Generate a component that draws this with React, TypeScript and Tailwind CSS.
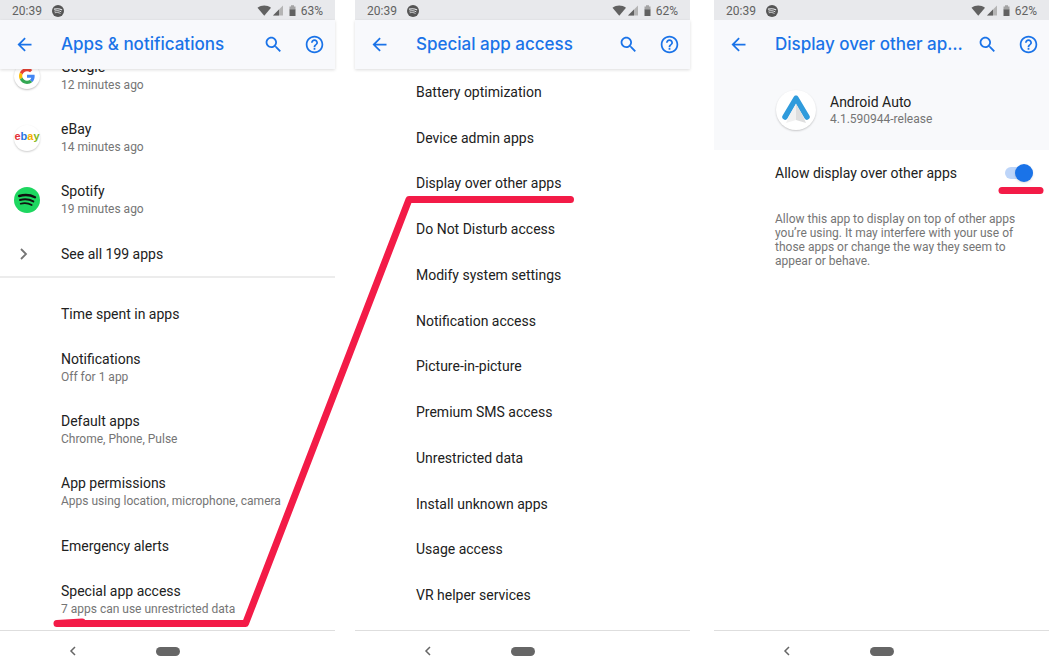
import type { ReactNode } from 'react'

type Row = { title: string; summary?: string }

const recentApps = [
  { title: 'Google', summary: '12 minutes ago', icon: <GoogleIcon /> },
  { title: 'eBay', summary: '14 minutes ago', icon: <EbayIcon /> },
  { title: 'Spotify', summary: '19 minutes ago', icon: <SpotifyIcon /> },
]

const appSettings: Row[] = [
  { title: 'Time spent in apps' },
  { title: 'Notifications', summary: 'Off for 1 app' },
  { title: 'Default apps', summary: 'Chrome, Phone, Pulse' },
  { title: 'App permissions', summary: 'Apps using location, microphone, camera' },
  { title: 'Emergency alerts' },
  { title: 'Special app access', summary: '7 apps can use unrestricted data' },
]

const specialAccess = [
  'Battery optimization',
  'Device admin apps',
  'Display over other apps',
  'Do Not Disturb access',
  'Modify system settings',
  'Notification access',
  'Picture-in-picture',
  'Premium SMS access',
  'Unrestricted data',
  'Install unknown apps',
  'Usage access',
  'VR helper services',
]

export default function App() {
  return (
    <main className="relative flex h-screen bg-white font-['Roboto',sans-serif] text-sm text-[#212121]">
      {/* Apps & notifications */}
      <Phone title="Apps & notifications" battery="63%">
        <div className="flex min-h-0 flex-1 flex-col justify-end overflow-hidden">
          {recentApps.map(app => (
            <SettingRow key={app.title} title={app.title} summary={app.summary} icon={app.icon} />
          ))}
          <SettingRow title="See all 199 apps" icon={<ChevronIcon />} />
          <hr className="mb-3 shrink-0 border-t-2 border-[#ececec]" />
          {appSettings.map(row => (
            <SettingRow key={row.title} title={row.title} summary={row.summary} />
          ))}
        </div>
      </Phone>

      {/* Special app access */}
      <Phone title="Special app access" battery="62%" className="ml-5">
        <div className="flex min-h-0 flex-1 flex-col pb-3">
          {specialAccess.map(title => (
            <button key={title} className="flex-1 pl-[61px] text-left">{title}</button>
          ))}
        </div>
      </Phone>

      {/* Display over other apps */}
      <Phone title="Display over other apps" battery="62%" className="ml-6" flat>
        <div className="flex items-center gap-3.5 bg-[#f8f9fb] pt-[21px] pr-4 pb-5 pl-[62px]">
          <AndroidAutoIcon />
          <div className="pt-0.5 leading-[17px]">
            <h2>Android Auto</h2>
            <p className="text-xs leading-[17px] text-[#757575]">4.1.590944-release</p>
          </div>
        </div>
        <label className="flex h-[46px] items-center justify-between pr-4 pl-[61px]">
          Allow display over other apps
          <input
            type="checkbox"
            role="switch"
            defaultChecked
            className="relative h-3 w-7 appearance-none rounded-full bg-[#dadce0] before:absolute before:-top-[3px] before:left-0 before:size-[18px] before:rounded-full before:bg-white before:shadow checked:bg-[#bdd5f9] checked:before:left-2.5 checked:before:bg-[#1a73e8]"
          />
        </label>
        <p className="pt-4 pr-6 pl-[61px] text-xs leading-[14px] text-[#757575]">
          Allow this app to display on top of other apps you’re using. It may interfere with your use of those apps or change the way they seem to appear or behave.
        </p>
      </Phone>

      {/* Marker strokes that lead from screen to screen */}
      <svg
        className="pointer-events-none absolute inset-0 size-full"
        viewBox="0 0 1049 671"
        preserveAspectRatio="none"
        fill="none"
        stroke="#f31b47"
        strokeWidth="7"
        strokeLinecap="round"
        strokeLinejoin="round"
      >
        <path d="M57 623.500 L82 622 M57 623.500 H245.500 L409 199.500 H570.500" />
        <path d="M1002 190.500 H1040" />
      </svg>
    </main>
  )
}

function Phone({ title, battery, className = '', flat = false, children }: {
  title: string
  battery: string
  className?: string
  flat?: boolean
  children: ReactNode
}) {
  return (
    <section className={`flex min-w-0 flex-1 flex-col ${className}`}>
      <div className="flex h-5 shrink-0 items-center bg-[#e8e9ec] px-3 pt-px text-xs text-[#616161]">
        <span>20:39</span>
        <SpotifyGlyph />
        <StatusIcons />
        <span className="ml-1">{battery}</span>
      </div>
      <header className={`z-10 flex h-[49px] shrink-0 items-center bg-[#f8f9fc] pr-[9px] pl-3 text-[#1a73e8] ${flat ? '' : 'shadow-[0_1px_3px_rgba(0,0,0,0.14)]'}`}>
        <IconButton label="Navigate up" d="M20 11H7.830l5.590-5.590L12 4l-8 8 8 8 1.410-1.410L7.830 13H20v-2z" />
        <h1 className="ml-[25px] min-w-0 flex-1 truncate font-['Inter',sans-serif] text-[17px] font-medium">{title}</h1>
        <div className="ml-3 flex gap-[17px]">
          <IconButton label="Search" d="M15.500 14h-.79l-.28-.27C15.410 12.590 16 11.110 16 9.500 16 5.910 13.090 3 9.500 3S3 5.910 3 9.500 5.910 16 9.500 16c1.610 0 3.090-.59 4.230-1.570l.27.28v.79l5 4.990L20.490 19l-4.990-5zm-6 0C7.010 14 5 11.990 5 9.500S7.010 5 9.500 5 14 7.010 14 9.500 11.990 14 9.500 14z" />
          <IconButton label="Help" d="M11 18h2v-2h-2v2zm1-16C6.480 2 2 6.480 2 12s4.480 10 10 10 10-4.480 10-10S17.520 2 12 2zm0 18c-4.410 0-8-3.590-8-8s3.590-8 8-8 8 3.590 8 8-3.590 8-8 8zm0-14c-2.210 0-4 1.790-4 4h2c0-1.100.9-2 2-2s2 .9 2 2c0 2-3 1.750-3 5h2c0-2.250 3-2.500 3-5 0-2.210-1.790-4-4-4z" />
        </div>
      </header>
      {children}
      <nav className="mt-auto flex h-[41px] shrink-0 items-center border-t border-[#dedede] text-[#666]">
        <div className="flex flex-1 justify-center">
          <button aria-label="Back" className="mr-2.5">
            <svg viewBox="0 0 8 10" className="h-2.5 w-2" fill="none" stroke="currentColor" strokeWidth="1.500">
              <path d="M6 1 2 5l4 4" />
            </svg>
          </button>
        </div>
        <button aria-label="Home" className="h-[9px] w-6 rounded-full bg-[#666]" />
        <div className="flex-1" />
      </nav>
    </section>
  )
}

function SettingRow({ title, summary, icon }: Row & { icon?: ReactNode }) {
  return (
    <button className={`flex shrink-0 items-center pt-[3px] text-left ${summary ? 'h-[62px]' : 'h-[46px]'}`}>
      <span className="flex w-[61px] shrink-0 pb-0.5 pl-3.5">{icon}</span>
      <span className="leading-[17px]">
        {title}
        {summary && <span className="block text-xs leading-[18px] text-[#757575]">{summary}</span>}
      </span>
    </button>
  )
}

function IconButton({ label, d }: { label: string; d: string }) {
  return (
    <button aria-label={label} className="flex size-6 items-center justify-center">
      <svg viewBox="0 0 24 24" className="size-[21px]" fill="currentColor">
        <path d={d} />
      </svg>
    </button>
  )
}

function StatusIcons() {
  return (
    <svg viewBox="0 0 40 12" className="ml-auto h-3 w-10" fill="#616161">
      <path d="M0.500 2.700C4.500-.3 10-.3 14 2.700L7.250 10.700z" />
      <path d="M26 .5v10H16z" fill="#b4b4b4" />
      <path d="M22 4.500v6h-6z" />
      <path d="M34 .3h3v1.200h1.500V5h-6V1.500H34z" fill="#a3a3a3" />
      <path d="M32.500 4.500h6V11h-6z" />
    </svg>
  )
}

function SpotifyGlyph() {
  return (
    <svg viewBox="0 0 26 26" className="ml-2.5 size-3">
      <circle cx="13" cy="13" r="13" fill="#555" />
      <SpotifyWaves color="#e8e9ec" />
    </svg>
  )
}

function SpotifyIcon() {
  return (
    <svg viewBox="0 0 26 26" className="size-[26px]">
      <circle cx="13" cy="13" r="13" fill="#1ed760" />
      <SpotifyWaves color="#111" />
    </svg>
  )
}

function SpotifyWaves({ color }: { color: string }) {
  return (
    <g fill="none" stroke={color} strokeLinecap="round">
      <path d="M5.200 9c5.500-1.600 11.200-1.200 15.800 1.300" strokeWidth="2.400" />
      <path d="M6 13c4.800-1.300 9.300-.8 13.300 1.400" strokeWidth="2" />
      <path d="M6.700 16.700c4-1 7.700-.6 11 1.300" strokeWidth="1.700" />
    </g>
  )
}

function GoogleIcon() {
  return (
    <span className="flex size-[26px] items-center justify-center rounded-full bg-white shadow-[0_1px_2px_rgba(0,0,0,0.25)]">
      <svg viewBox="0 0 48 48" className="size-4">
        <path fill="#ea4335" d="M24 9.500c3.540 0 6.710 1.220 9.210 3.600l6.850-6.850C35.900 2.380 30.470 0 24 0 14.620 0 6.510 5.380 2.560 13.220l7.980 6.190C12.430 13.720 17.740 9.500 24 9.500z" />
        <path fill="#4285f4" d="M46.980 24.550c0-1.570-.15-3.090-.38-4.550H24v9.020h12.940c-.58 2.960-2.260 5.480-4.780 7.180l7.730 6c4.510-4.180 7.090-10.360 7.090-17.650z" />
        <path fill="#fbbc05" d="M10.530 28.590c-.48-1.450-.76-2.990-.76-4.590s.27-3.140.76-4.590l-7.980-6.190C.92 16.460 0 20.120 0 24s.92 7.540 2.560 10.780l7.970-6.190z" />
        <path fill="#34a853" d="M24 48c6.480 0 11.930-2.130 15.890-5.810l-7.730-6c-2.150 1.450-4.920 2.300-8.160 2.300-6.260 0-11.570-4.220-13.470-9.910l-7.980 6.190C6.510 42.620 14.620 48 24 48z" />
      </svg>
    </span>
  )
}

function EbayIcon() {
  return (
    <span className="flex size-[26px] items-center justify-center rounded-full bg-white pb-0.5 font-['Liberation_Sans',sans-serif] text-[11px] font-bold shadow-[0_1px_2px_rgba(0,0,0,0.2)]">
      <span className="text-[#e53238]">e</span>
      <span className="text-[#2a75e0]">b</span>
      <span className="text-[#f5af02]">a</span>
      <span className="text-[#86b817]">y</span>
    </span>
  )
}

function ChevronIcon() {
  return (
    <svg viewBox="0 0 20 20" className="size-5" fill="none" stroke="#757575" strokeWidth="1.800">
      <path d="M7 5 12 10l-5 5" />
    </svg>
  )
}

function AndroidAutoIcon() {
  return (
    <span className="flex size-10 items-center justify-center rounded-full bg-white shadow-[0_1px_2px_rgba(0,0,0,0.2)]">
      <svg viewBox="0 0 40 40" className="size-10">
        <path d="M20 8.500 9 27M20 8.500l11 18.500" stroke="#2f9bdc" strokeWidth="5.500" strokeLinecap="round" />
        <path d="M20 13.500v16.500l10 3-3-7z" fill="#dedede" />
        <path d="M20 13.500v16.500l-10 3 3-7z" fill="#f1f1f1" />
      </svg>
    </span>
  )
}
